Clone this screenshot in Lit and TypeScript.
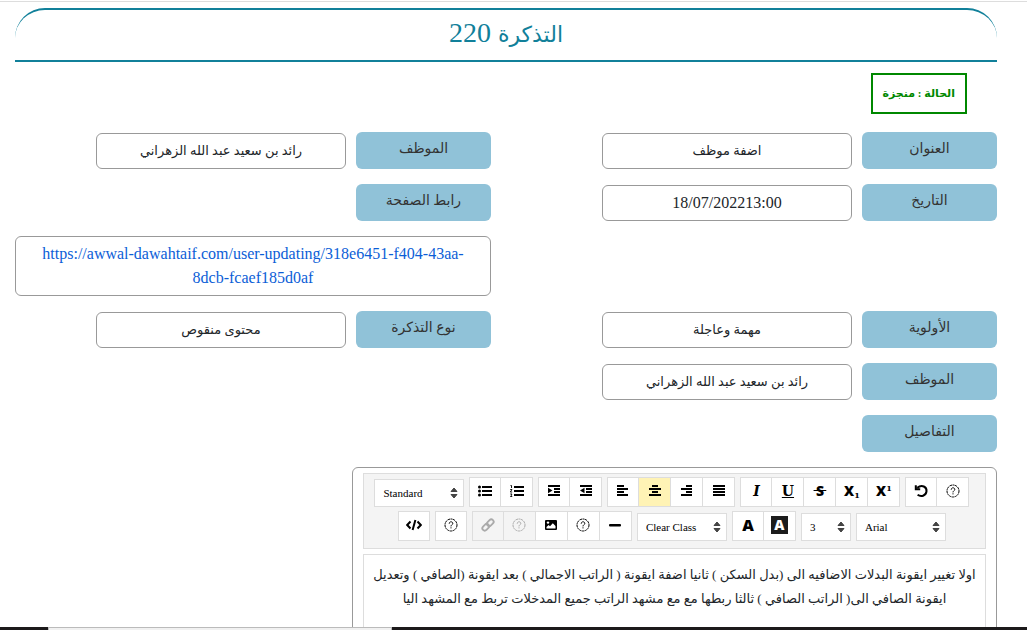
import { LitElement, html, svg, css, TemplateResult } from 'lit';
import { customElement, property, state } from 'lit/decorators.js';

const bars = (rows: number[][]) =>
  svg`${rows.map(([x, y, w]) => svg`<rect x=${x} y=${y} width=${w} height="2"/>`)}`;

const icon = (body: unknown) =>
  html`<svg class="icon" viewBox="0 0 16 16" aria-hidden="true">${body}</svg>`;

const help = () => icon(svg`
  <circle cx="8" cy="8" r="6" fill="none" stroke="currentColor" stroke-width="1" stroke-dasharray="2.2 .5"/>
  <path d="M6.2 6.7C6.2 4.2 9.8 4.3 9.8 6.4C9.8 7.7 8 7.7 8 9.4M8 10.3V11.4" fill="none" stroke="currentColor" stroke-width="1"/>`);

const icons: Record<string, () => TemplateResult> = {
  ul: () => icon(svg`${bars([[5, 3, 10], [5, 7, 10], [5, 11, 10]])}
    <circle cx="2.5" cy="4" r="1.5"/><circle cx="2.5" cy="8" r="1.5"/><circle cx="2.5" cy="12" r="1.5"/>`),
  ol: () => icon(svg`${bars([[5, 3, 10], [5, 7, 10], [5, 11, 10]])}
    <path d="M1.5 2.5H2.5V5M1.2 6.5H3L1.3 9H3.2M1.2 11H3L2.2 12.2L3 13.5H1.2" fill="none" stroke="currentColor" stroke-width=".9"/>`),
  indent: () => icon(svg`${bars([[2, 2, 12], [8, 5, 6], [8, 8, 6], [2, 11, 12]])}<path d="M2 4.8L6.5 7.5L2 10.2Z"/>`),
  outdent: () => icon(svg`${bars([[2, 2, 12], [8, 5, 6], [8, 8, 6], [2, 11, 12]])}<path d="M6.5 4.8L2 7.5L6.5 10.2Z"/>`),
  left: () => icon(bars([[2, 2, 7], [2, 5, 11], [2, 8, 7], [2, 11, 11]])),
  center: () => icon(bars([[5, 2, 6], [2, 5, 12], [5, 8, 6], [2, 11, 12]])),
  right: () => icon(bars([[7, 2, 6], [2, 5, 11], [7, 8, 6], [2, 11, 11]])),
  justify: () => icon(bars([[2, 2, 12], [2, 5, 12], [2, 8, 12], [2, 11, 12]])),
  italic: () => html`<i class="serif">I</i>`,
  underline: () => html`<u class="serif">U</u>`,
  strike: () => html`<s class="glyph">&thinsp;S&thinsp;</s>`,
  sub: () => html`<span class="glyph">X<sub>1</sub></span>`,
  sup: () => html`<span class="glyph">X<sup>1</sup></span>`,
  undo: () => icon(svg`<path d="M4.2 4.8C9 1.2 14 3.8 13.5 8.4C13 12.8 8 14.3 4.6 11.8M2.8 2.2V6.3H7.2" fill="none" stroke="currentColor" stroke-width="2"/>`),
  help,
  code: () => icon(svg`<path d="M4.5 4.5L1.2 8L4.5 11.5M11.5 4.5L14.8 8L11.5 11.5M9.4 3L6.6 13" fill="none" stroke="currentColor" stroke-width="2"/>`),
  link: () => icon(svg`<g fill="none" stroke="currentColor" stroke-width="1.8" transform="rotate(-45 8 8)">
    <rect x="1" y="5.6" width="7.6" height="4.8" rx="2.4"/><rect x="7.4" y="5.6" width="7.6" height="4.8" rx="2.4"/></g>`),
  image: () => icon(svg`<path fill-rule="evenodd" d="M3 3H13Q14 3 14 4V12Q14 13 13 13H3Q2 13 2 12V4Q2 3 3 3ZM3.5 11.5H12.5V9L9.8 6.2L7 9.2L5.6 8L3.5 10Z"/><circle cx="5" cy="5.6" r="1.2" fill="#fff"/>`),
  line: () => icon(svg`<rect x="2" y="7" width="12" height="2.6" rx="1"/>`),
  color: () => html`<span class="letter">A</span>`,
  fill: () => html`<span class="letter inverse">A</span>`,
};

type Tool = [icon: string, title: string];

@customElement('tool-group')
class ToolGroup extends LitElement {
  @property({ attribute: false }) tools: Tool[] = [];
  @property() active = '';
  @property({ type: Number }) disabledCount = 0;

  static styles = css`
    :host { display: flex; }
    button {
      box-sizing: border-box; width: 32px; height: 30px; padding: 0 0 2px;
      display: flex; align-items: center; justify-content: center;
      background: #fff; color: #000; border: 1px solid #ddd; border-left-width: 0;
    }
    button:first-child { border-left-width: 1px; }
    button.active { background: #fff3b5; }
    button:disabled { background: #f4f4f4; color: #aaa; }
    .icon { width: 16px; height: 16px; fill: currentColor; }
    .serif { font: bold 14px/16px "DejaVu Serif", serif; }
    i.serif { font-style: italic; }
    .glyph { font: 900 14px/16px "Open Sans", sans-serif; white-space: pre; }
    .glyph sub, .glyph sup { font: bold 8px/0 "DejaVu Serif", serif; }
    .glyph sub { vertical-align: -2px; }
    .glyph sup { vertical-align: 5px; }
    .letter { font: 900 16px/18px "Open Sans", sans-serif; }
    .inverse { width: 17px; background: #1c1c1c; color: #fff; font-size: 14px; text-align: center; }
  `;

  render() {
    return this.tools.map(([name, title], i) => html`<button type="button"
      class=${this.active === name ? 'active' : ''} title=${title} aria-label=${title}
      ?disabled=${i < this.disabledCount}>${icons[name]()}</button>`);
  }
}

@customElement('tool-select')
class ToolSelect extends LitElement {
  @property() label = '';
  @property() value = '';

  static styles = css`
    :host { display: block; width: 90px; }
    :host([narrow]) { width: 50px; }
    .wrap { display: grid; align-items: center; }
    select {
      grid-area: 1 / 1; appearance: none; box-sizing: border-box; width: 100%; height: 28px;
      margin: 0; padding: 0 16px 0 8px; border: 1px solid #ddd; border-radius: 0;
      background: #fff; color: #000; font: 11px/16px "Liberation Serif", serif;
    }
    .arrows { grid-area: 1 / 1; justify-self: end; width: 8px; height: 12px; margin-right: 6px; fill: #444; pointer-events: none; }
  `;

  render() {
    return html`<div class="wrap">
      <select aria-label=${this.label}><option>${this.value}</option></select>
      <svg class="arrows" viewBox="0 0 8 12" aria-hidden="true"><path d="M1 4.5L4 1L7 4.5ZM1 7.5L4 11L7 7.5Z" stroke="#444" stroke-linejoin="round"/></svg>
    </div>`;
  }
}

@customElement('text-editor')
class TextEditor extends LitElement {
  @property() value = '';

  static styles = css`
    :host { display: block; box-sizing: border-box; border: 1px solid #999; border-radius: 6px; padding: 5px 10px; }
    .toolbar {
      direction: ltr; display: flex; flex-wrap: wrap; justify-content: center; align-items: flex-end;
      padding: 3px 0; border: 1px solid #ddd; background: #f4f4f4;
    }
    .toolbar > * { margin: 0 5px 4px 0; }
    textarea {
      display: block; box-sizing: border-box; width: 100%; height: 200px; margin: 5px 0 0; padding: 8px 4px;
      border: 1px solid #ddd; background: #fff; color: #212529; resize: none; outline: none;
      font: 13px/24px "Liberation Serif", "DejaVu Sans", serif; text-align: center;
    }
  `;

  render() {
    return html`
      <div class="toolbar" role="toolbar" aria-label="Formatting">
        <tool-select label="Paragraph" value="Standard"></tool-select>
        <tool-group .tools=${[['ul', 'Bullets'], ['ol', 'Numbering']]}></tool-group>
        <tool-group .tools=${[['indent', 'Indent'], ['outdent', 'Outdent']]}></tool-group>
        <tool-group active="center" .tools=${[['left', 'Left'], ['center', 'Center'], ['right', 'Right'], ['justify', 'Justify']]}></tool-group>
        <tool-group .tools=${[['italic', 'Italic'], ['underline', 'Underline'], ['strike', 'Strikethrough'], ['sub', 'Subscript'], ['sup', 'Superscript']]}></tool-group>
        <tool-group .tools=${[['undo', 'Undo'], ['help', 'Redo']]}></tool-group>
        <tool-group .tools=${[['code', 'Source']]}></tool-group>
        <tool-group .tools=${[['help', 'Clear format']]}></tool-group>
        <tool-group .disabledCount=${2} .tools=${[['link', 'Link'], ['help', 'Unlink'], ['image', 'Image'], ['help', 'Video'], ['line', 'Line']]}></tool-group>
        <tool-select label="Class" value="Clear Class"></tool-select>
        <tool-group .tools=${[['color', 'Text colour'], ['fill', 'Background colour']]}></tool-group>
        <tool-select narrow label="Size" value="3"></tool-select>
        <tool-select label="Font" value="Arial"></tool-select>
      </div>
      <textarea aria-label="التفاصيل" .value=${this.value}></textarea>`;
  }
}

@customElement('ticket-field')
class TicketField extends LitElement {
  @property() label = '';
  @property() value = '';
  @property() href = '';

  static styles = css`
    :host { display: block; }
    dl { display: flex; flex-wrap: wrap; align-items: flex-end; gap: 15px 10px; margin: 0; }
    dt, dd { box-sizing: border-box; margin: 0; border-radius: 6px; text-align: center; }
    dt { width: 135px; height: 37px; background: #90c2d8; color: #333; font-size: 14px; line-height: 34px; }
    dd { width: 250px; min-height: 36px; padding: 5px 15px; border: 1px solid #999; font-size: 13px; line-height: 24px; }
    dd.wide { width: 100%; font-size: 16px; }
    dd.number { font-size: 16px; }
    a { direction: ltr; unicode-bidi: isolate; color: #0b5ed7; text-decoration: none; }
  `;

  render() {
    const latin = /^[\d/:]+$/.test(this.value);
    return html`<dl><dt>${this.label}</dt>${this.href
      ? html`<dd class="wide"><a href=${this.href}>${this.href}</a></dd>`
      : this.value ? html`<dd class=${latin ? 'number' : ''}>${this.value}</dd>` : ''}</dl>`;
  }
}

@customElement('app-root')
class AppRoot extends LitElement {
  @state() private details =
    'اولا تغيير ايقونة البدلات الاضافيه الى (بدل السكن ) ثانيا اضفة ايقونة ( الراتب الاجمالي ) بعد ايقونة (الصافي ) وتعديل\n' +
    'ايقونة الصافي الى( الراتب الصافي ) ثالثا ربطها مع مع مشهد الراتب جميع المدخلات تربط مع المشهد اليا';

  static styles = css`
    :host {
      display: flex; flex-direction: column; height: 100vh; direction: rtl;
      background: #fff; color: #212529; font-family: "Liberation Serif", "DejaVu Sans", serif;
    }
    .rule { flex: none; height: 1px; margin-top: 1px; background: #ddd; }
    main { flex: 1; min-height: 0; overflow: hidden; padding: 6px 30px 0 15px; }
    h1 {
      margin: 0; padding-bottom: 4px; border: solid #11809a; border-width: 2px 0; border-radius: 30px 30px 0 0;
      color: #11809a; font-size: 28px; font-weight: normal; line-height: 46px; text-align: center;
    }
    h1 .name { font-size: 22px; line-height: 1; }
    .status {
      width: fit-content; margin: 11px 30px 18px; padding: 0 10px; border: 2px solid #080;
      color: #080; font-size: 11px; font-weight: bold; line-height: 37px;
    }
    .fields { display: grid; grid-template-columns: 1fr 1fr; gap: 15px 30px; }
    .start { grid-column: 1; }
    text-editor { width: calc(66% - 3px); margin-top: 15px; }
    footer { flex: none; display: flex; direction: ltr; height: 3px; background: #1c1a1b; }
    .tab { box-sizing: border-box; width: 344px; margin-left: 48px; background: #f1f1f1; border: solid #bbb; border-width: 1px 1px 0; }
  `;

  render() {
    return html`
      <div class="rule"></div>
      <main>
        <h1><span class="name">التذكرة</span> 220</h1>
        <div class="status">الحالة : منجزة</div>
        <div class="fields">
          <ticket-field label="العنوان" value="اضفة موظف"></ticket-field>
          <ticket-field label="الموظف" value="رائد بن سعيد عبد الله الزهراني"></ticket-field>
          <ticket-field label="التاريخ" value="18/07/202213:00"></ticket-field>
          <ticket-field label="رابط الصفحة" href="https://awwal-dawahtaif.com/user-updating/318e6451-f404-43aa-8dcb-fcaef185d0af"></ticket-field>
          <ticket-field label="الأولوية" value="مهمة وعاجلة"></ticket-field>
          <ticket-field label="نوع التذكرة" value="محتوى منقوص"></ticket-field>
          <ticket-field class="start" label="الموظف" value="رائد بن سعيد عبد الله الزهراني"></ticket-field>
          <ticket-field class="start" label="التفاصيل"></ticket-field>
        </div>
        <text-editor .value=${this.details}></text-editor>
      </main>
      <footer><div class="tab"></div></footer>`;
  }
}
